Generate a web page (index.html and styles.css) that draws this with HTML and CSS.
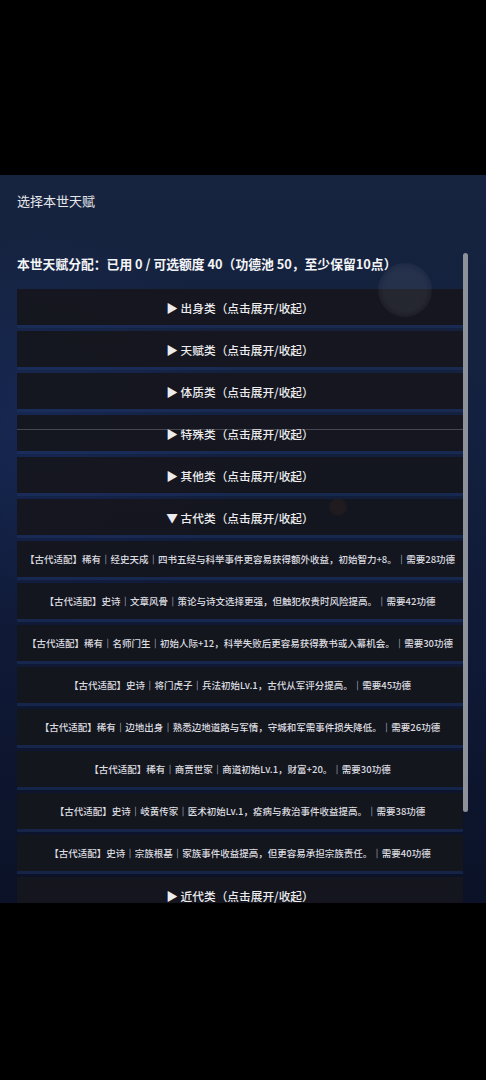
FILE: index.html
```html
<!DOCTYPE html>
<html lang="zh-CN">
<head>
<meta charset="utf-8">
<title>选择本世天赋</title>
<link rel="stylesheet" href="styles.css">
</head>
<body>
<div class="screen">
  <section class="panel">
    <span class="orb orb-grey"></span>
    <span class="orb orb-dark"></span>
    <span class="hairline"></span>
    <h1 class="title">选择本世天赋</h1>
    <div class="scroller">
      <p class="stats">本世天赋分配：已用 0 / 可选额度 40（功德池 50，至少保留10点）</p>
      <div class="list">
        <div class="row head">▶ 出身类（点击展开/收起）</div>
        <div class="row head">▶ 天赋类（点击展开/收起）</div>
        <div class="row head">▶ 体质类（点击展开/收起）</div>
        <div class="row head">▶ 特殊类（点击展开/收起）</div>
        <div class="row head">▶ 其他类（点击展开/收起）</div>
        <div class="row head">▼ 古代类（点击展开/收起）</div>
        <div class="row item">【古代适配】稀有｜经史天成｜四书五经与科举事件更容易获得额外收益，初始智力+8。｜需要28功德</div>
        <div class="row item">【古代适配】史诗｜文章风骨｜策论与诗文选择更强，但触犯权贵时风险提高。｜需要42功德</div>
        <div class="row item">【古代适配】稀有｜名师门生｜初始人际+12，科举失败后更容易获得教书或入幕机会。｜需要30功德</div>
        <div class="row item">【古代适配】史诗｜将门虎子｜兵法初始Lv.1，古代从军评分提高。｜需要45功德</div>
        <div class="row item">【古代适配】稀有｜边地出身｜熟悉边地道路与军情，守城和军需事件损失降低。｜需要26功德</div>
        <div class="row item">【古代适配】稀有｜商贾世家｜商道初始Lv.1，财富+20。｜需要30功德</div>
        <div class="row item">【古代适配】史诗｜岐黄传家｜医术初始Lv.1，疫病与救治事件收益提高。｜需要38功德</div>
        <div class="row item">【古代适配】史诗｜宗族根基｜家族事件收益提高，但更容易承担宗族责任。｜需要40功德</div>
        <div class="row head">▶ 近代类（点击展开/收起）</div>
      </div>
    </div>
    <span class="thumb"></span>
  </section>
</div>
</body>
</html>
```

FILE: styles.css
```css
* { box-sizing: border-box; }

html, body {
  margin: 0;
  padding: 0;
  background: #000;
}

body {
  font-family: "Noto Sans CJK SC", "Noto Sans", sans-serif;
  color: #e8e8ea;
}

.screen {
  width: 486px;
  height: 1080px;
  padding-top: 175px;
}

.panel {
  position: relative;
  height: 728px;
  overflow: hidden;
  background:
    radial-gradient(ellipse 60% 40% at 8% 35%, rgba(28, 52, 118, 0.35), transparent 70%),
    linear-gradient(180deg, #17243f 0%, #13203f 35%, #0f1834 70%, #0b1227 100%);
}

.title {
  margin: 0;
  padding: 18px 17px 0;
  font-size: 13px;
  line-height: 16px;
  font-weight: 400;
  color: #e6e7ea;
}

.scroller {
  margin-top: 41px;
  height: 653px;
  overflow: hidden;
  padding: 0 23px 0 17px;
}

.stats {
  margin: 0;
  padding-top: 5px;
  font-size: 12.8px;
  line-height: 18px;
  font-weight: 700;
  color: #f4f5f7;
  white-space: nowrap;
}

.list {
  margin-top: 16px;
  display: flex;
  flex-direction: column;
  gap: 6px;
}

.row {
  height: 36px;
  flex: none;
  display: flex;
  align-items: center;
  justify-content: center;
  background: rgba(21, 22, 30, 0.95);
  box-shadow: 0 3px 0 rgba(30, 52, 100, 0.5);
  white-space: nowrap;
}

.head {
  font-size: 11.7px;
  font-weight: 500;
  color: #ececee;
}

.item {
  font-size: 9.5px;
  font-weight: 500;
  color: #dcdde0;
}

/* scrollbar thumb */
.thumb {
  position: absolute;
  left: 463px;
  top: 78px;
  width: 5px;
  height: 559px;
  border-radius: 3px;
  background: #8d9199;
}

/* floating particles over the list */
.orb {
  position: absolute;
  border-radius: 50%;
  pointer-events: none;
  z-index: 2;
}

.orb-grey {
  left: 378px;
  top: 88px;
  width: 54px;
  height: 54px;
  background: radial-gradient(circle, rgba(120, 125, 140, 0.16) 55%, rgba(120, 125, 140, 0.06) 75%, transparent 100%);
}

.orb-dark {
  left: 329px;
  top: 323px;
  width: 18px;
  height: 18px;
  background: radial-gradient(circle, rgba(40, 30, 30, 0.6) 50%, transparent 100%);
}

.hairline {
  position: absolute;
  left: 17px;
  top: 254px;
  width: 451px;
  height: 1px;
  background: rgba(140, 145, 155, 0.4);
}
```
